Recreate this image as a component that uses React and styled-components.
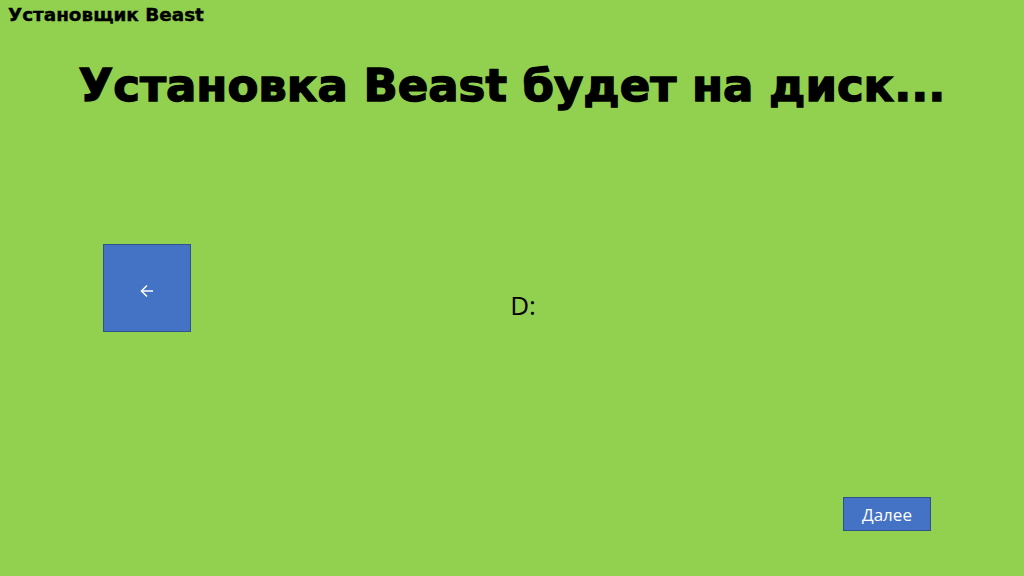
import React from "react";
import styled, { createGlobalStyle } from "styled-components";

const GlobalStyle = createGlobalStyle`
  html, body {
    margin: 0;
    padding: 0;
    background: #92d050;
  }
  #root {
    height: 576px;
  }
`;

const Page = styled.div`
  height: 576px;
  width: 1024px;
  box-sizing: border-box;
  background: #92d050;
  display: flex;
  flex-direction: column;
  overflow: hidden;
`;

const Caption = styled.div`
  padding: 4px 0 0 8px;
  font-family: "DejaVu Sans", "Liberation Sans", sans-serif;
  font-weight: 700;
  font-size: 18.4px;
  -webkit-text-stroke: 0.4px #000;
  color: #000;
  line-height: 22px;
`;

const Title = styled.h1`
  margin: 30px 0 0;
  text-align: center;
  font-family: "DejaVu Sans", "Liberation Sans", sans-serif;
  font-weight: 700;
  font-size: 45px;
  -webkit-text-stroke: 1.4px #000;
  line-height: 60px;
  color: #000;
`;

const Middle = styled.div`
  margin-top: 128px;
  display: grid;
  grid-template-columns: 1fr auto 1fr;
  align-items: start;
`;

const BackButton = styled.button`
  justify-self: start;
  margin-left: 103px;
  width: 88px;
  height: 88px;
  background: #4472c4;
  border: 1px solid #2f528f;
  color: #fff;
  display: flex;
  align-items: center;
  justify-content: center;
  padding: 5px 0 0;
  cursor: pointer;
`;

const Drive = styled.div`
  margin-top: 46px;
  margin-left: 22px;
  font-family: "Open Sans", "Noto Sans", sans-serif;
  font-size: 26px;
  line-height: 30px;
  color: #000;
`;

const Footer = styled.div`
  margin-top: auto;
  margin-bottom: 45px;
  display: flex;
  justify-content: flex-end;
  padding-right: 93px;
`;

const NextButton = styled.button`
  width: 88px;
  height: 34px;
  background: #4472c4;
  border: 1px solid #2f528f;
  color: #fff;
  font-family: "Open Sans", "Noto Sans", sans-serif;
  font-size: 17px;
  padding: 0;
  cursor: pointer;
`;

function ArrowLeft() {
  return (
    <svg width="14" height="14" viewBox="0 0 14 14" fill="none" stroke="#fff" strokeWidth="1.5">
      <path d="M13 7H1.5" />
      <path d="M7 1.5L1.5 7L7 12.5" />
    </svg>
  );
}

export default function App() {
  return (
    <Page>
      <GlobalStyle />
      <Caption>Установщик Beast</Caption>
      <Title>Установка Beast будет на диск...</Title>
      <Middle>
        <BackButton aria-label="Назад">
          <ArrowLeft />
        </BackButton>
        <Drive>D:</Drive>
        <div />
      </Middle>
      <Footer>
        <NextButton>Далее</NextButton>
      </Footer>
    </Page>
  );
}
